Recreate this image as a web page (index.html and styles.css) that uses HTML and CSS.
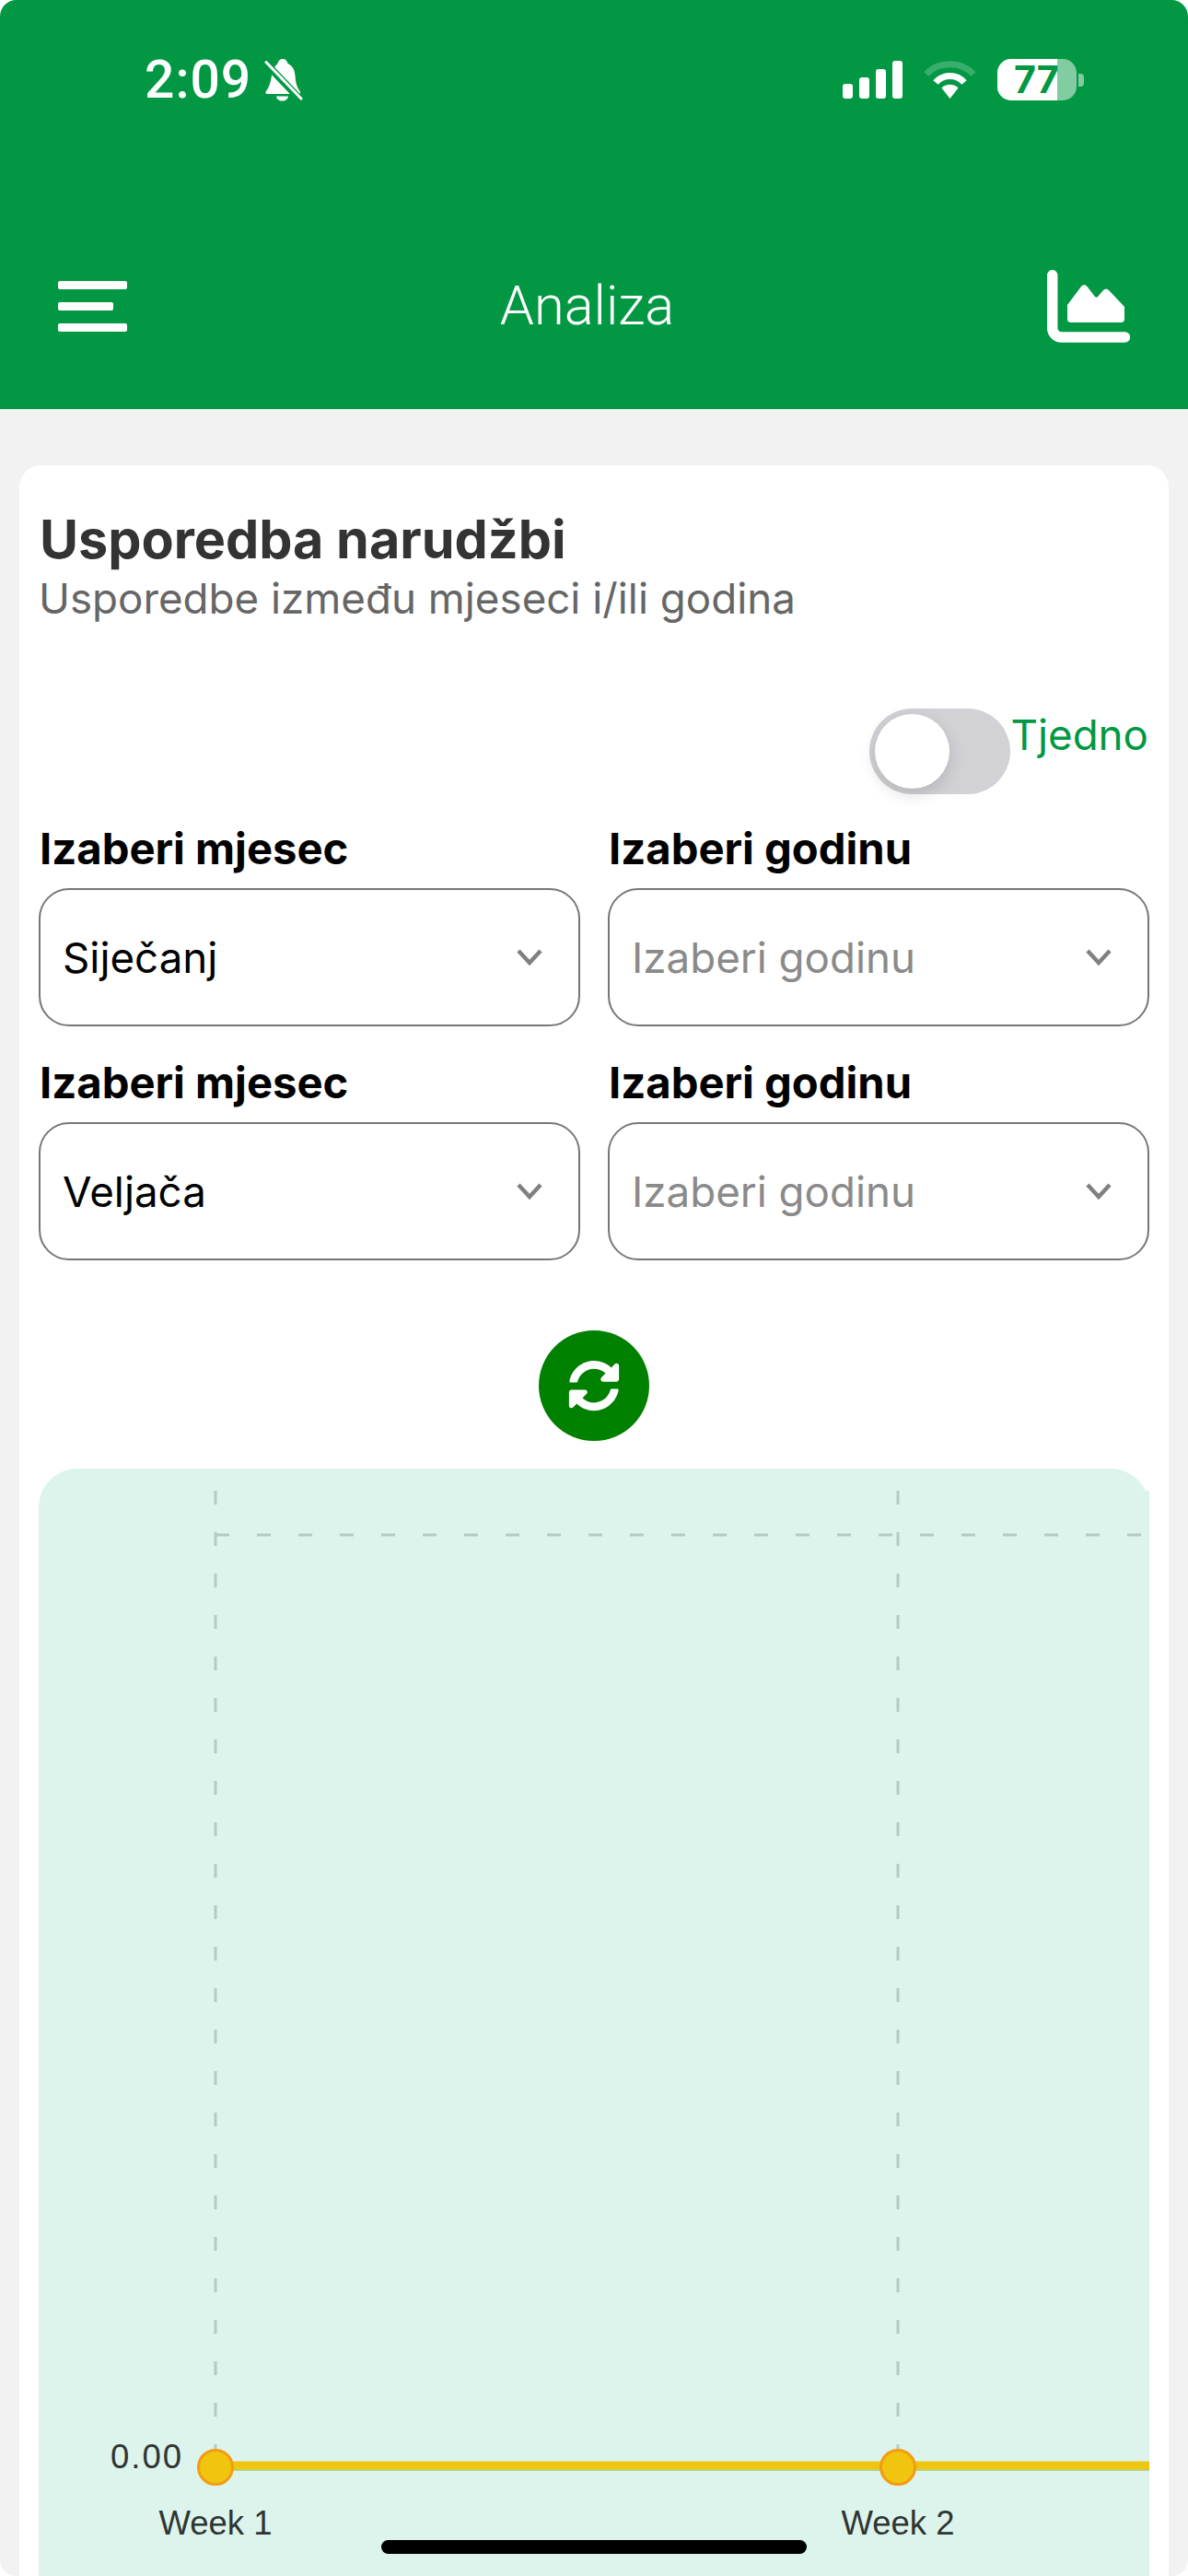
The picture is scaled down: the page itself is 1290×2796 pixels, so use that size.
FILE: index.html
```html
<!DOCTYPE html>
<html lang="en">
<head>
    <meta charset="UTF-8" />
    <meta name="viewport" content="width=device-width, initial-scale=1" />
    <title>Analiza</title>
    <link rel="stylesheet" href="styles.css">
</head>
<body>
<div class="screen">
    <header class="header">
        <div class="status">
            <div class="status-left">
                <span class="time">2:09</span>
                <svg class="bell" viewBox="0 0 42 46" width="42" height="46">
                    <path fill="#fff" d="M20 0c3 0 5 2 5.500 5 5 2 7.500 7 8 13 .5 7 1.500 12 5 17 1.500 2 .5 3-2 3H4c-2.500 0-3.500-1-2-3 3.500-5 5-10 6-17 .5-6 4-11 6.500-13 .5-3 2.500-5 5.500-5zM13 40.500h13c-.5 3-3 5-6.500 5s-6-2-6.500-5z"/>
                    <path stroke="#029843" stroke-width="8" d="M0 3l41 43"/>
                    <path stroke="#fff" stroke-width="3" stroke-linecap="round" d="M2 3.500l38 39.500"/>
                </svg>
            </div>
            <div class="status-right">
                <svg class="signal" viewBox="0 0 65 41" width="65" height="41">
                    <rect x="0" y="25" width="11" height="16" rx="3" fill="#fff"/>
                    <rect x="18" y="18" width="11" height="23" rx="3" fill="#fff"/>
                    <rect x="36" y="9" width="11" height="32" rx="3" fill="#fff"/>
                    <rect x="54" y="0" width="11" height="41" rx="3" fill="#fff"/>
                </svg>
                <svg class="wifi" viewBox="0 0 57 42" width="57" height="42">
                    <path d="M3 15.500C16 1 41 1 54 15.500" fill="none" stroke="#fff" stroke-opacity=".22" stroke-width="7"/>
                    <path d="M13 24.500C21 15 36 15 44 24.500" fill="none" stroke="#fff" stroke-width="7"/>
                    <path d="M19.500 30.500C24 25.500 33 25.500 37.500 30.500L28.500 42z" fill="#fff"/>
                </svg>
                <div class="battery">
                    <div class="battery-fill"></div>
                    <span class="battery-num">77</span>
                </div>
                <div class="battery-tip"></div>
            </div>
        </div>
        <div class="nav">
            <div class="burger">
                <span class="bar"></span>
                <span class="bar short"></span>
                <span class="bar"></span>
            </div>
            <h1 class="nav-title">Analiza</h1>
            <svg class="chart-icon" viewBox="0 0 90 79" width="90" height="79">
                <path d="M5.700 5.700V63a10 10 0 0 0 10 10H84.500" fill="none" stroke="#fff" stroke-width="11.500" stroke-linecap="round"/>
                <path fill="#fff" d="M22 38L37 18c2-2.500 4.500-2.500 6.500 0L52 29c1 1 2 1 3 0l6-7c2-2 4-2 6 0l17 18v13c0 3-1.500 4-4 4H26c-2.500 0-4-1-4-4z"/>
            </svg>
        </div>
    </header>

    <section class="card">
        <h2 class="title">Usporedba narudžbi</h2>
        <p class="subtitle">Usporedbe između mjeseci i/ili godina</p>

        <div class="toggle-row">
            <div class="toggle"><span class="knob"></span></div>
            <span class="toggle-label">Tjedno</span>
        </div>

        <div class="fields">
            <div class="field">
                <div class="field-label">Izaberi mjesec</div>
                <div class="select"><span>Siječanj</span><svg class="chevron" viewBox="0 0 30 20" width="30" height="20"><path d="M3 3l12 13L27 3" fill="none" stroke="#808080" stroke-width="4.500"/></svg></div>
            </div>
            <div class="field">
                <div class="field-label">Izaberi godinu</div>
                <div class="select placeholder"><span>Izaberi godinu</span><svg class="chevron" viewBox="0 0 30 20" width="30" height="20"><path d="M3 3l12 13L27 3" fill="none" stroke="#808080" stroke-width="4.500"/></svg></div>
            </div>
            <div class="field">
                <div class="field-label">Izaberi mjesec</div>
                <div class="select"><span>Veljača</span><svg class="chevron" viewBox="0 0 30 20" width="30" height="20"><path d="M3 3l12 13L27 3" fill="none" stroke="#808080" stroke-width="4.500"/></svg></div>
            </div>
            <div class="field">
                <div class="field-label">Izaberi godinu</div>
                <div class="select placeholder"><span>Izaberi godinu</span><svg class="chevron" viewBox="0 0 30 20" width="30" height="20"><path d="M3 3l12 13L27 3" fill="none" stroke="#808080" stroke-width="4.500"/></svg></div>
            </div>
        </div>

        <div class="refresh-row">
            <button class="refresh">
                <svg viewBox="0 0 512 512" width="56" height="56"><path fill="#fff" d="M370.720 133.280C339.458 104.008 298.888 87.962 255.848 88c-77.458.068-144.328 53.178-162.791 126.850-1.344 5.363-6.122 9.150-11.651 9.150H24.103c-7.498 0-13.194-6.807-11.807-14.176C33.933 94.924 134.813 8 256 8c66.448 0 126.791 26.136 171.315 68.685L463.030 40.970C478.149 25.851 504 36.559 504 57.941V192c0 13.255-10.745 24-24 24H345.941c-21.382 0-32.090-25.851-16.971-40.971l41.750-41.749zM32 296h134.059c21.382 0 32.090 25.851 16.971 40.971l-41.750 41.750c31.262 29.273 71.835 45.319 114.876 45.280 77.418-.07 144.315-53.144 162.787-126.849 1.344-5.363 6.122-9.150 11.651-9.150h57.304c7.498 0 13.194 6.807 11.807 14.176C478.067 417.076 377.187 504 256 504c-66.448 0-126.791-26.136-171.315-68.685L48.970 471.030C33.851 486.149 8 475.441 8 454.059V320c0-13.255 10.745-24 24-24z"/></svg>
            </button>
        </div>

        <div class="chart">
            <svg class="chart-svg" viewBox="0 0 1206 1179" width="1206" height="1179">
                <rect x="1190" y="0" width="16" height="30" fill="#dcf4ec"/>
                <g stroke="#b5c9c2" stroke-width="3" fill="none" stroke-dasharray="15 30">
                    <path d="M192 0V1070"/>
                    <path d="M933 0V1070"/>
                    <path d="M192 48H1206"/>
                </g>
                <path d="M192 1059H1206" stroke="#a9d79b" stroke-width="10"/>
                <path d="M192 1058H1206" stroke="#eec510" stroke-width="9"/>
                <circle cx="192" cy="1060" r="18.500" fill="#f1c40f" stroke="#f39c12" stroke-width="3"/>
                <circle cx="933" cy="1060" r="18.500" fill="#f1c40f" stroke="#f39c12" stroke-width="3"/>
                <text class="axis-text axis-value" x="157" y="1061" text-anchor="end">0.00</text>
                <text class="axis-text" x="192" y="1133" text-anchor="middle">Week 1</text>
                <text class="axis-text" x="933" y="1133" text-anchor="middle">Week 2</text>
            </svg>
        </div>
    </section>

    <div class="home-bar"></div>
</div>
</body>
</html>
```

FILE: styles.css
```css
* { box-sizing: border-box; }
body { margin: 0; background: #fff; font-family: Inter, "Noto Sans", sans-serif; }
.screen { position: relative; width: 1290px; height: 2796px; overflow: hidden; background: #f2f2f2; border-radius: 18px; }

.header { height: 444px; background: #029843; color: #fff; padding-top: 64px; }
.status { display: flex; justify-content: space-between; height: 46px; padding: 0 113px 0 157px; }
.status-left { display: flex; align-items: center; gap: 14px; }
.time { font-family: Roboto, sans-serif; font-weight: 500; font-size: 57px; line-height: 46px; letter-spacing: 1px; }
.status-right { display: flex; align-items: flex-end; }
.signal { margin-bottom: 3px; }
.wifi { margin: 0 23px 3px; }
.battery { position: relative; width: 86px; height: 45px; border-radius: 15px; background: rgba(255,255,255,.5); margin-bottom: 1px; }
.battery-fill { width: 65px; height: 45px; background: #fff; border-radius: 15px 0 0 15px; }
.battery-num { position: absolute; left: 18px; top: 0; font-weight: 700; font-size: 41px; line-height: 45px; color: #029843; }
.battery-tip { width: 6px; height: 14px; margin: 0 0 16px 2px; border-radius: 0 4px 4px 0; background: rgba(255,255,255,.5); }

.nav { display: flex; align-items: center; justify-content: space-between; margin-top: 183px; padding: 0 63px; height: 79px; }
.burger { display: flex; flex-direction: column; gap: 14px; width: 75px; }
.bar { display: block; height: 9px; background: #fff; border-radius: 2px; }
.bar.short { width: 60px; }
.nav-title { margin: 0; font-family: Roboto, sans-serif; font-weight: 300; font-size: 59.500px; line-height: 79px; }

.card { width: 1248px; margin: 61px 0 0 21px; padding: 0 21px; background: #fff; border-radius: 24px; height: 2400px; }
.title { margin: 0; padding-top: 46px; padding-left: 1px; font-weight: 700; font-size: 57.500px; line-height: 68px; color: #333; }
.subtitle { margin: 0; padding-top: 5px; font-size: 45.700px; line-height: 52px; color: #666; }

.toggle-row { display: flex; justify-content: flex-end; align-items: flex-start; margin-top: 93px; padding-right: 1px; }
.toggle { width: 153px; height: 93px; border-radius: 47px; background: #d1d1d6; padding: 6px; }
.knob { display: block; width: 81px; height: 81px; border-radius: 50%; background: #fff; box-shadow: 0 6px 18px rgba(0,0,0,.14); }
.toggle-label { font-size: 45.700px; line-height: 58px; color: #029843; }

.fields { display: grid; grid-template-columns: 588px 588px; column-gap: 30px; margin-top: 27px; }
.field-label { height: 75px; padding-left: 1px; font-weight: 700; font-size: 47.200px; line-height: 64px; color: #000; }
.select { display: flex; align-items: center; justify-content: space-between; height: 150px; padding: 0 38px 0 24px; border: 2px solid #777; border-radius: 33px; font-size: 45.700px; color: #000; margin-bottom: 29px; }
.select.placeholder { color: #8a8a8a; }

.refresh-row { display: flex; justify-content: center; margin-top: 47px; }
.refresh { display: flex; align-items: center; justify-content: center; width: 120px; height: 120px; border: 0; padding: 0; border-radius: 50%; background: #008000; }

.chart { margin-top: 30px; width: 1206px; height: 1300px; padding-top: 24px; background: #dcf4ec; border-radius: 42px 42px 0 0; }
.chart-svg { display: block; }
.axis-text { font-family: "Liberation Sans", sans-serif; font-size: 36.500px; fill: #2f3532; }
.axis-value { letter-spacing: 2px; }

.home-bar { position: absolute; left: 414px; top: 2757px; width: 462px; height: 15px; border-radius: 8px; background: #000; }
```
